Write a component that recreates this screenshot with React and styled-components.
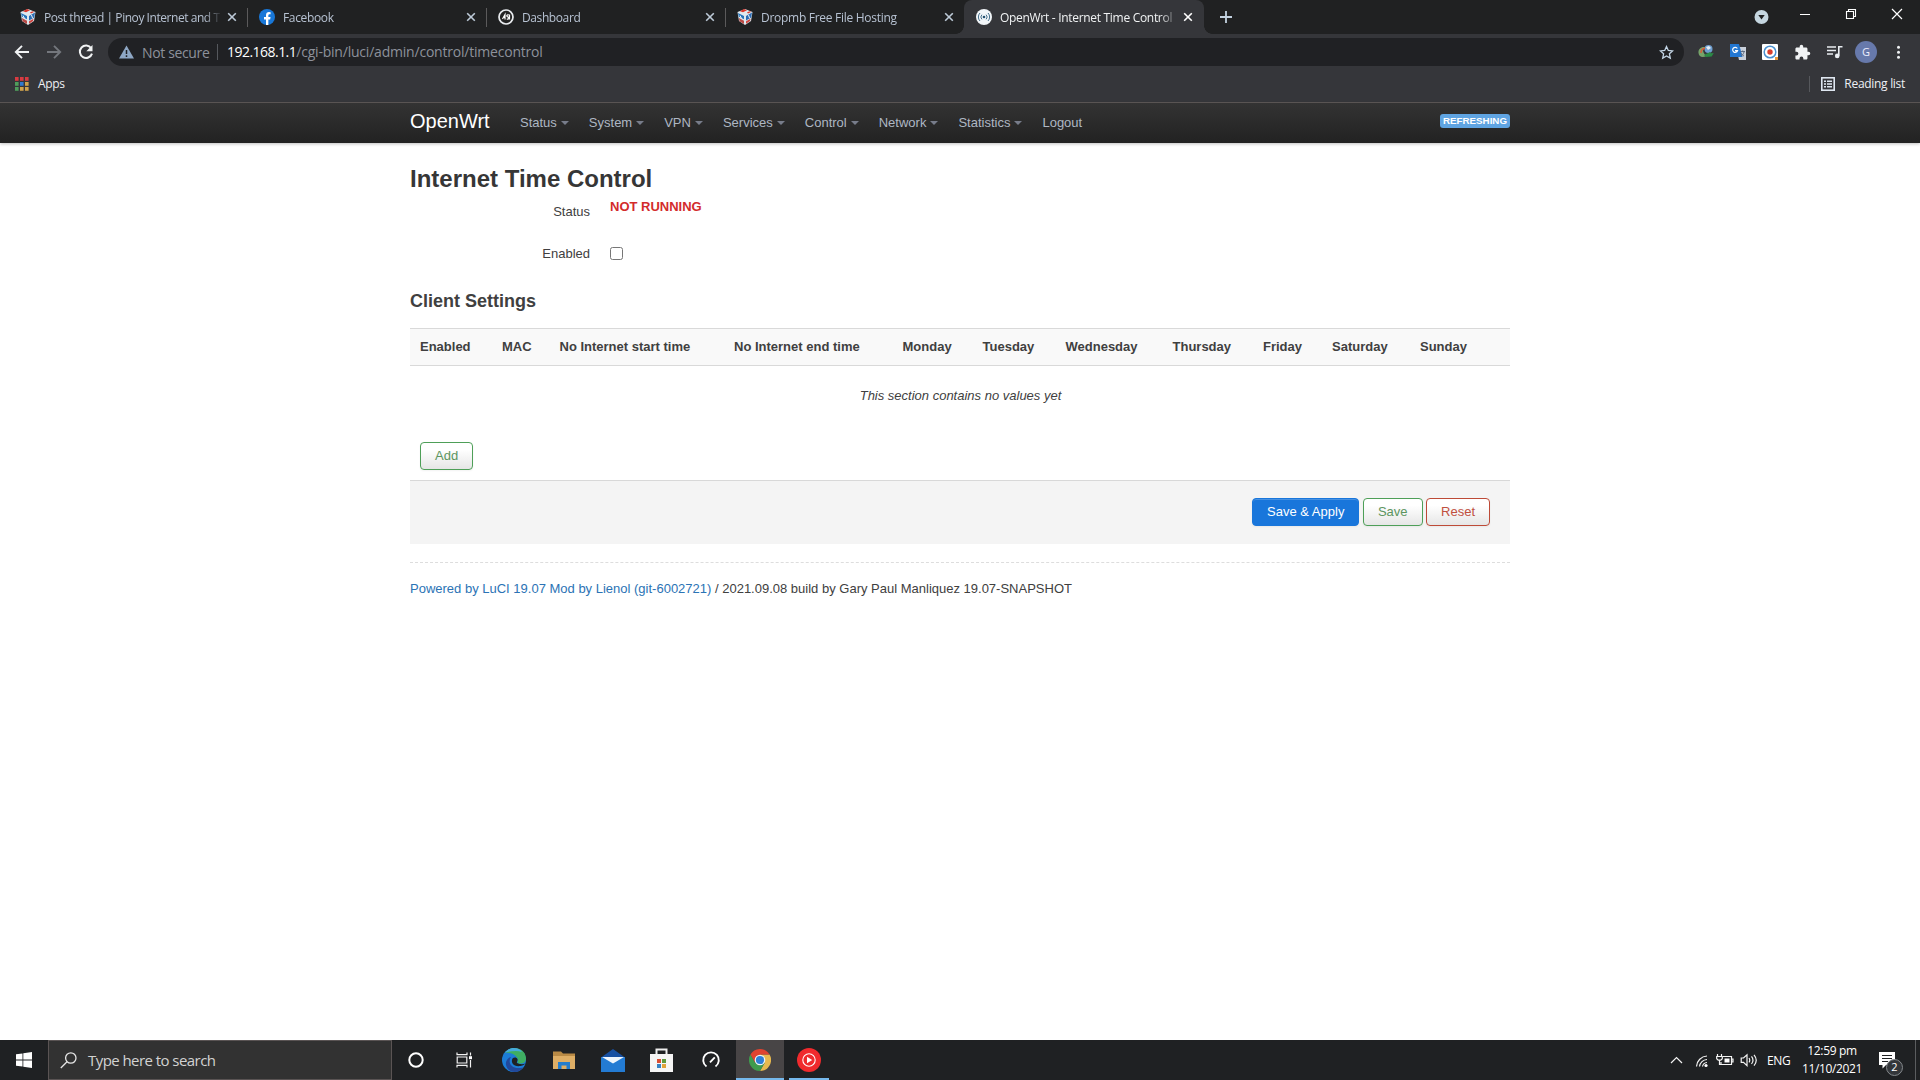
import styled, { createGlobalStyle, css } from "styled-components";

const ui = '"Open Sans", "Noto Sans", sans-serif';
const arial = '"Liberation Sans", Arial, sans-serif';

const GlobalStyle = createGlobalStyle`
    * { box-sizing: border-box; }
    body {
        margin: 0;
        background: #fff;
        overflow: hidden;
    }
    svg { display: block; flex: none; }
`;

const Screen = styled.div`
    width: 1920px;
    height: 1080px;
    display: flex;
    flex-direction: column;
`;

/* ---------- browser ---------- */

const Chrome = styled.header`
    font-family: ${ui};
    background: #35363a;
    height: 103px;
    flex: none;
    border-bottom: 1px solid #5d5857;
`;

const TabStrip = styled.div`
    height: 34px;
    background: #202122;
    display: flex;
    padding-left: 8px;
`;

const Tab = styled.div`
    position: relative;
    width: 239px;
    height: 34px;
    padding: 0 8px 0 12px;
    display: flex;
    align-items: center;
    font-size: 12px;
    color: #b7c2d2;
    ${props => props.$active && css`
        width: 240px;
        background: #35363a;
        color: #f1f3f4;
        border-radius: 8px 8px 0 0;
        &::before, &::after {
            content: "";
            position: absolute;
            bottom: 0;
            width: 8px;
            height: 8px;
        }
        &::before {
            left: -8px;
            background: radial-gradient(circle at 0 0, transparent 7.5px, #35363a 8px);
        }
        &::after {
            right: -8px;
            background: radial-gradient(circle at 100% 0, transparent 7.5px, #35363a 8px);
        }
    `}
    ${props => props.$divided && css`
        &::before {
            content: "";
            position: absolute;
            left: 0;
            top: 8px;
            width: 1px;
            height: 19px;
            background: #5b5a5b;
        }
    `}
`;

const TabTitle = styled.span`
    width: 176px;
    margin: 0 7px 0 8px;
    line-height: 17px;
    white-space: nowrap;
    letter-spacing: ${props => props.$track}px;
    mask-image: linear-gradient(90deg, #000 160px, transparent 178px);
`;

const NewTab = styled.div`
    width: 44px;
    display: flex;
    align-items: center;
    justify-content: center;
`;

const WindowControls = styled.div`
    margin-left: auto;
    padding: 8px 17px 0 0;
    display: flex;
    align-items: flex-start;
    gap: 34px;
`;

const ChromeMenu = styled.div`
    margin-right: -4px;
`;

const Toolbar = styled.div`
    height: 36px;
    display: flex;
    align-items: center;
    padding: 0 6px 0 14px;
`;

const NavButtons = styled.div`
    width: 94px;
    display: flex;
    gap: 16px;
    align-items: center;
`;

const AddressBar = styled.div`
    width: 1576px;
    height: 28px;
    border-radius: 14px;
    background: #202124;
    display: flex;
    align-items: center;
    padding: 0 10px;
    font-size: 14px;
    color: #8d919b;
`;

const Security = styled.div`
    width: 100px;
    height: 16px;
    padding-left: 1px;
    margin-right: 9px;
    display: flex;
    gap: 8px;
    align-items: center;
    border-right: 1px solid #55585d;
    letter-spacing: -0.36px;
    white-space: nowrap;
`;

const Url = styled.span`
    flex: 1;
    letter-spacing: -0.21px;
    line-height: 20px;
    b {
        font-weight: 400;
        color: #fff;
        letter-spacing: -0.53px;
    }
`;

const Extensions = styled.div`
    flex: 1;
    display: grid;
    grid-template-columns: repeat(7, 32px);
    place-items: center;
    padding-left: 6px;
`;

const Avatar = styled.div`
    width: 22px;
    height: 22px;
    border-radius: 50%;
    background: #6779ab;
    color: #eef;
    font-size: 11px;
    line-height: 22px;
    text-align: center;
`;

const Bookmarks = styled.div`
    height: 28px;
    display: flex;
    align-items: center;
    justify-content: space-between;
    padding: 0 15px 0 15px;
    font-size: 12px;
    line-height: 16px;
    color: #eef0f4;
`;

const Bookmark = styled.div`
    display: flex;
    align-items: center;
    gap: 9px;
    letter-spacing: -0.3px;
    span { margin-top: -1px; }
`;

const ReadingList = styled(Bookmark)`
    height: 16px;
    border-left: 1px solid #56585c;
    padding-left: 11px;
`;

/* ---------- router page ---------- */

const Page = styled.div`
    flex: 1;
    background: #fff;
    font-family: ${arial};
    font-size: 13px;
    line-height: 18px;
    color: #404040;
`;

const TopBar = styled.nav`
    height: 40px;
    background: linear-gradient(#333, #222);
    box-shadow: 0 1px 3px rgba(0, 0, 0, 0.25);
`;

const Container = styled.div`
    width: 1100px;
    margin: 0 auto;
`;

const NavRow = styled(Container)`
    height: 38px;
    display: flex;
    align-items: center;
`;

const Brand = styled.span`
    color: #fff;
    font-size: 20px;
    width: 110px;
    line-height: 20px;
    padding-bottom: 3px;
`;

const NavItem = styled.a`
    display: flex;
    align-items: center;
    color: #aeb7c3;
    margin-right: 20px;
    padding-top: 1px;
    ${props => props.$menu && css`
        &::after {
            content: "";
            border: 4px solid transparent;
            border-top-color: #777c8a;
            border-bottom: 0;
            margin: 1px 0 0 4px;
        }
    `}
`;

const Indicator = styled.span`
    margin: 0 0 3px auto;
    padding: 0 3px;
    height: 14px;
    border-radius: 3px;
    background: #5fa4e2;
    color: #fff;
    font-size: 9.75px;
    font-weight: 700;
    line-height: 13px;
`;

const Title = styled.h2`
    margin: 0;
    padding-top: 18px;
    font-size: 24px;
    line-height: 36px;
    color: #363636;
`;

const Field = styled.div`
    display: flex;
    height: ${props => props.$height}px;
`;

const Label = styled.label`
    width: 180px;
    margin-right: 20px;
    padding-top: 6px;
    text-align: right;
`;

const StatusText = styled.b`
    color: #d32b2b;
    padding-top: 1px;
`;

const Checkbox = styled.input`
    width: 13px;
    height: 13px;
    margin: 8px 0 0;
`;

const SectionTitle = styled.h3`
    margin: 0;
    font-size: 18px;
    line-height: 36px;
    color: #404040;
`;

const HeadRow = styled.div`
    margin-top: 9px;
    height: 38px;
    display: grid;
    grid-template-columns: 82px 57.5px 174.5px 168.5px 80px 83px 107px 90.5px 69px 88px 1fr;
    align-items: center;
    background: #f9f9f9;
    border-top: 1px solid #d9d9d9;
    border-bottom: 1px solid #d9d9d9;
    font-weight: 700;
    span { padding-left: 10px; white-space: nowrap; }
`;

const EmptyRow = styled.div`
    height: 76px;
    padding: 21px 0 0 1px;
    text-align: center;
    font-style: italic;
`;

const tones = {
    save: { color: '#5c9560', border: '#4e9f58' },
    reset: { color: '#c0503f', border: '#bd4a37' },
};

const Button = styled.button`
    height: 28px;
    padding: 0 14px 1px;
    border-radius: 4px;
    font: 13px/18px ${arial};
    color: ${props => tones[props.$tone].color};
    border: 1px solid ${props => tones[props.$tone].border};
    background: linear-gradient(#fff, #fff 25%, #e6e6e6);
    box-shadow: inset 0 1px 0 rgba(255, 255, 255, .2), 0 1px 2px rgba(0, 0, 0, .05);
`;

const PrimaryButton = styled(Button)`
    color: #fff;
    border-color: #1976db;
    background: #1976db;
`;

const AddRow = styled.div`
    height: 38px;
    padding-left: 10px;
`;

const Actions = styled.div`
    height: 64px;
    padding: 17px 20px 0 0;
    display: flex;
    justify-content: flex-end;
    gap: 3.5px;
    background: #f4f4f4;
    border-top: 1px solid #d8d8d8;
`;

const Footer = styled.footer`
    margin-top: 18px;
    padding-top: 17px;
    border-top: 1px dashed #ddd;
    a { color: #2b73b5; }
`;

/* ---------- taskbar ---------- */

const Taskbar = styled.footer`
    height: 40px;
    flex: none;
    background: #1f2123;
    display: flex;
    font-family: ${ui};
    color: #fff;
`;

const Cell = styled.div`
    width: ${props => props.$w}px;
    height: 40px;
    display: flex;
    align-items: center;
    justify-content: center;
    ${props => props.$running && css`
        padding-top: 2px;
        border-bottom: 2px solid #76b9ed;
    `}
    ${props => props.$active && css`
        background: #484546;
    `}
`;

const BackgroundCell = styled(Cell)`
    margin-left: 5px;
`;

const SearchBox = styled.div`
    width: 344px;
    border: 1px solid #5a5454;
    background: #323232;
    display: flex;
    align-items: center;
    gap: 11px;
    padding-left: 11px;
    font-size: 15px;
    color: #d2d2d2;
    letter-spacing: -0.56px;
`;

const Tray = styled.div`
    margin-left: auto;
    display: flex;
    align-items: center;
`;

const Lang = styled.span`
    width: 24px;
    margin-left: 8px;
    font-size: 12px;
    letter-spacing: -0.4px;
`;

const Clock = styled.div`
    width: 76px;
    margin-left: 3px;
    text-align: center;
    font-size: 12px;
    line-height: 18px;
    letter-spacing: -0.35px;
`;

const Notice = styled.div`
    position: relative;
    width: 24px;
    height: 40px;
    margin: 0 12px 0 9px;
    padding-top: 12px;
`;

const NoticeCount = styled.span`
    position: absolute;
    left: 7px;
    top: 19px;
    width: 17px;
    height: 17px;
    border-radius: 50%;
    border: 1px solid #85898c;
    background: #33363a;
    font-size: 11px;
    line-height: 14px;
    text-align: center;
`;

const ShowDesktop = styled.div`
    width: 5px;
    height: 40px;
    border-left: 1px solid #5b5d5f;
`;

/* ---------- icons ---------- */

const CubeIcon = () => (
    <svg width="16" height="18" viewBox="0 0 16 18">
        <path d="M.5 4 8 1l7.500 3-1.500 9-6 4-6-4z" fill="#dfe8ee" />
        <path d="M3 3.300 7 1l3 1.200L6 4.300zM10 4.200l3-1 1 .8-3 1.500z" fill="#d9352b" />
        <path d="M1 5l6 3v3.200L1.800 8.500z" fill="#2472ba" />
        <path d="M9 8l6-3.500-.8 5L9 12.500z" fill="#2b6cb4" />
        <path d="M2 10l5 2.800V16l-4.500-2.800z" fill="#b94a45" />
        <path d="M9 13.200l4.500-2.500-.4 2.300L9 15.800z" fill="#cf4640" />
        <path d="M3 7.500l1.500 3M11.500 7l1 3" stroke="#eef5fa" strokeWidth="1" fill="none" />
    </svg>
);

const FacebookIcon = () => (
    <svg width="16" height="16" viewBox="0 0 16 16">
        <circle cx="8" cy="8" r="8" fill="#1877d8" />
        <path d="M7 16v-5.600H5V8h2V6.300C7 4.200 8.200 3.100 10 3.100l1.600.15v2h-1c-1 0-1.250.6-1.250 1.250V8h2.200l-.4 2.400H9.350V16z" fill="#fff" />
    </svg>
);

const DashIcon = () => (
    <svg width="16" height="16" viewBox="0 0 16 16">
        <circle cx="8" cy="8" r="7" fill="#222" stroke="#e9ecef" strokeWidth="1.700" />
        <path d="M4.500 10 7 5.500v5M6 8.500h1.500M10.800 6c-2-.8-2.800 1.200-1 1.900s1 2.600-1 2M11.500 5.500v5" stroke="#fff" strokeWidth="1.200" fill="none" />
    </svg>
);

const WrtIcon = () => (
    <svg width="16" height="16" viewBox="0 0 16 16">
        <circle cx="8" cy="8" r="8" fill="#f2f6f9" />
        <circle cx="8" cy="8" r="1.300" fill="#24506f" />
        <path d="M5.900 5.700a3.300 3.300 0 0 0 0 4.600M10.100 5.700a3.300 3.300 0 0 1 0 4.600M4 4a5.700 5.700 0 0 0 0 8M12 4a5.700 5.700 0 0 1 0 8" stroke="#456f8c" strokeWidth="1" fill="none" />
    </svg>
);

const CloseIcon = ({ color = '#bdcad8' }) => (
    <svg width="10" height="10" viewBox="0 0 10 10" stroke={color} strokeWidth="1.600">
        <path d="M1.200 1.200l7.600 7.600M8.800 1.200 1.200 8.800" />
    </svg>
);

const Arrow = ({ color, back }) => (
    <svg width="16" height="16" viewBox="0 0 16 16" fill="none" stroke={color} strokeWidth="1.900">
        <path d={back ? 'M15 8H2.500M8 1.800 1.800 8 8 14.200' : 'M1 8h12.500M8 1.800 14.200 8 8 14.200'} />
    </svg>
);

const ReloadIcon = () => (
    <svg width="16" height="16" viewBox="0 0 16 16">
        <path d="M13.200 4.200A6.200 6.200 0 1 0 14 9.600" fill="none" stroke="#f1f3f4" strokeWidth="2" />
        <path d="M14.500 1v6.200H8.300z" fill="#f1f3f4" />
    </svg>
);

const WarnIcon = () => (
    <svg width="15" height="14" viewBox="0 0 15 14">
        <path d="M7.500.5 15 13.500H0z" fill="#8ea7c4" />
        <path d="M7.500 5v4M7.500 10.300v1.600" stroke="#202124" strokeWidth="1.500" />
    </svg>
);

const StarIcon = () => (
    <svg width="15" height="15" viewBox="0 0 15 15">
        <path d="M7.500 1.500l1.800 4 4.300.4-3.200 2.900.9 4.300-3.800-2.200-3.800 2.200.9-4.300L1.400 5.900l4.300-.4z" fill="none" stroke="#c3d5e5" strokeWidth="1.300" />
    </svg>
);

const GlobeArrowIcon = () => (
    <svg width="16" height="16" viewBox="0 0 16 16">
        <circle cx="10.500" cy="5" r="4" fill="#6f9fd0" />
        <path d="M8 3l3-1 2 2-3 2z" fill="#e7eef5" />
        <path d="M.5 9C0 5 4 2 7.500 3.500c-3.500 1.500-3 5 1 8.500-4 2-7.500 1-8-3z" fill="#77a36a" />
        <path d="M3 9c0-3 1.500-4.500 4-4.800" stroke="#d95a3b" strokeWidth="1.500" fill="none" />
        <path d="M6 11l6-3 1 1.200 2.700-.2-2 3.500L8 13z" fill="#2b8a45" />
    </svg>
);

const TranslateIcon = () => (
    <svg width="16" height="16" viewBox="0 0 16 16">
        <path d="M6 3h10v13H9z" fill="#c9d0da" />
        <path d="M0 0h9l3.500 13H0z" fill="#2277d2" />
        <path d="M7.300 4.500A2.500 2.500 0 1 0 7.500 6.700H5" stroke="#fff" strokeWidth="1.200" fill="none" />
        <path d="M10.500 7.500h4.500M12.700 6.500v1M14 8c-.5 2-1.500 3-3 4M11 9c.5 1.500 2 2.500 3 3" stroke="#56657d" strokeWidth=".9" fill="none" />
    </svg>
);

const TargetIcon = () => (
    <svg width="16" height="16" viewBox="0 0 16 16">
        <rect width="16" height="16" rx="1" fill="#fff" />
        <circle cx="8" cy="8" r="5.800" fill="none" stroke="#4a90cf" strokeWidth="1.500" />
        <circle cx="8" cy="8" r="2.700" fill="#d93d2d" />
        <path d="M13 13h3v3h-3z" fill="#e89a3c" />
    </svg>
);

const PuzzleIcon = () => (
    <svg width="17" height="17" viewBox="0 0 24 24" fill="#f1f3f4">
        <path d="M20.500 11H19V7c0-1.100-.9-2-2-2h-4V3.500a2.500 2.500 0 0 0-5 0V5H4c-1.100 0-2 .9-2 2v3.800h1.500a2.700 2.700 0 0 1 0 5.400H2V20c0 1.100.9 2 2 2h3.800v-1.500a2.700 2.700 0 0 1 5.400 0V22H17c1.100 0 2-.9 2-2v-4h1.500a2.500 2.500 0 0 0 0-5z" />
    </svg>
);

const QueueIcon = () => (
    <svg width="17" height="14" viewBox="0 0 17 14">
        <path d="M1 2h9M1 5.500h9M1 9h6" stroke="#e9edf1" strokeWidth="1.500" />
        <path d="M16.500 1.700h-3.700v9" stroke="#e9edf1" strokeWidth="1.600" fill="none" />
        <circle cx="11.200" cy="10.900" r="2.300" fill="#e9edf1" />
    </svg>
);

const DotsIcon = () => (
    <svg width="14" height="16" viewBox="0 0 14 16" fill="#eef1f3">
        <circle cx="7.500" cy="3.200" r="1.500" /><circle cx="7.500" cy="8.200" r="1.500" /><circle cx="7.500" cy="13.200" r="1.500" />
    </svg>
);

const appColors = ['#d93b41', '#d93b41', '#d93b41', '#4f9d5b', '#3079cf', '#cfa24c', '#4f9d5b', '#cfa24c', '#cfa24c'];

const AppsIcon = () => (
    <svg width="14" height="14" viewBox="0 0 14 14">
        {appColors.map((c, i) => (
            <rect key={i} x={(i % 3) * 5} y={Math.floor(i / 3) * 5} width="3.600" height="3.800" fill={c} />
        ))}
    </svg>
);

const ListIcon = () => (
    <svg width="14" height="14" viewBox="0 0 14 14">
        <rect x=".8" y=".8" width="12.400" height="12.400" fill="none" stroke="#dfe7f1" strokeWidth="1.600" />
        <path d="M3 4.200h2M6 4.200h5M3 7h2M6 7h5M3 9.800h2M6 9.800h5" stroke="#dfe7f1" strokeWidth="1.500" />
    </svg>
);

const StartIcon = () => (
    <svg width="16" height="16" viewBox="0 0 16 16" fill="#fff">
        <path d="M0 2.300 6.500 1.400v6.200H0zM7.300 1.300 16 0v7.600H7.300zM0 8.400h6.500v6.200L0 13.700zM7.300 8.400H16V16l-8.700-1.300z" />
    </svg>
);

const SearchIcon = () => (
    <svg width="17" height="17" viewBox="0 0 17 17" fill="none" stroke="#e6e6e6" strokeWidth="1.300">
        <circle cx="10.800" cy="6" r="5.200" /><path d="M7 9.800.8 16" />
    </svg>
);

const CortanaIcon = () => (
    <svg width="16" height="16" viewBox="0 0 16 16"><circle cx="8" cy="8" r="6.700" fill="none" stroke="#fff" strokeWidth="2" /></svg>
);

const TaskViewIcon = () => (
    <svg width="17" height="16" viewBox="0 0 17 16" fill="none" stroke="#f1f1f1" strokeWidth="1.200">
        <path d="M1 .5v2.200h10V.5M1 15.500v-2.200h10v2.200M1.200 5h9.600v6H1.200zM14.500.5v3M14.500 8v7.500" />
        <path d="M13 4.200h3v3h-3z" fill="#fff" stroke="none" />
    </svg>
);

const EdgeIcon = () => (
    <svg width="24" height="24" viewBox="0 0 24 24">
        <circle cx="12" cy="12" r="12" fill="#1c7cd6" />
        <path d="M3 4.500C9-3 23-1 24 10c.3 4-3 6-7 5.500-2-.3-1.500-1.500-1-3C16 8 9 4 3 4.500z" fill="#3fae62" />
        <path d="M3 4.500C8-2 17-.5 20 4c-5-2-11-1-17 .5z" fill="#46aadb" />
        <path d="M9 9c-4 6 1 13 12 10.500C17 26 6 25.500 4 17c-.8-4 2-7.500 5-8z" fill="#22489a" />
        <path d="M10.500 10.500c-2 4 1 8.500 8 7.500 3-.4 4.500-2 5-2.500-2 1-6 .8-8-.2-1.600-1 .5-2 0-4-.6-2.200-3.600-2.500-5-.8z" fill="#1f2123" />
    </svg>
);

const FolderIcon = () => (
    <svg width="22" height="19" viewBox="0 0 22 19">
        <path d="M0 .5h8l2 2h12V18H0z" fill="#b98a45" />
        <path d="M0 5h22v13H0z" fill="#deae65" />
        <path d="M5 18v-7h12v7h-3.500v-3.500h-5V18z" fill="#257dcc" />
    </svg>
);

const MailIcon = () => (
    <svg width="24" height="23" viewBox="0 0 24 23">
        <path d="M0 8.500 12 0l12 8.500z" fill="#1750a2" />
        <path d="M0 8h24v15H0z" fill="#237bd3" />
        <path d="M1 8h22l-11 6.500z" fill="#eef5fc" />
    </svg>
);

const StoreIcon = () => (
    <svg width="23" height="24" viewBox="0 0 23 24">
        <path d="M6.500 7V1.500h10V7" fill="none" stroke="#eee" strokeWidth="2" />
        <path d="M0 6h23v18H0z" fill="#f5f5f5" />
        <path d="M7 11h4v4H7z" fill="#d94d32" /><path d="M12 11h4v4h-4z" fill="#5e9a3e" />
        <path d="M7 16h4v4H7z" fill="#3582c4" /><path d="M12 16h4v4h-4z" fill="#e0a23a" />
    </svg>
);

const GaugeIcon = () => (
    <svg width="20" height="20" viewBox="0 0 20 20" fill="none" stroke="#fff" strokeWidth="1.900">
        <path d="M5.500 16.500a7.800 7.800 0 1 1 9 0M9 12.300l4.800-5" />
    </svg>
);

const ChromeIcon = () => (
    <svg width="22" height="22" viewBox="0 0 22 22">
        <path d="M11 11V5.500h9.530A11 11 0 0 1 11 22l4.500-8z" fill="#e8b94e" />
        <path d="M11 11l4.760 2.750L11 22A11 11 0 0 1 1.470 5.500l4.770 8.250z" fill="#3f9a4e" />
        <path d="M11 5.500h9.530a11 11 0 0 0-19.060 0l4.770 8.250z" fill="#df4330" />
        <circle cx="11" cy="11" r="5.300" fill="#eef3f8" />
        <circle cx="11" cy="11" r="4.100" fill="#2f7fd6" />
    </svg>
);

const MusicIcon = () => (
    <svg width="24" height="24" viewBox="0 0 24 24">
        <circle cx="12" cy="12" r="12" fill="#f02a2d" />
        <circle cx="12" cy="12" r="6.200" fill="none" stroke="#fff" strokeWidth="1.100" />
        <path d="M10 8.800l5.200 3.200-5.200 3.200z" fill="#fff" />
    </svg>
);

const TrayIcons = () => (
    <svg width="90" height="18" viewBox="0 0 90 18" fill="none" stroke="#f4f4f4" strokeWidth="1.200">
        <path d="M2 12l5.500-5.500L13 12" />
        <path d="M27.500 15.500A11 11 0 0 1 38 5M30.500 15.500A8 8 0 0 1 38 8.500M33.500 15.500A5 5 0 0 1 38 11.500" />
        <circle cx="37" cy="14.500" r="1.600" fill="#fff" stroke="none" />
        <g transform="translate(1 0)">
            <path d="M53 5.500h8.500v8H51V11M61.500 8h1.500v3h-1.500M47.500 3v2.500M51.500 3v2.500M46.700 5.500h5.600v2.200l-1.500 1.500h-2.600l-1.500-1.500zM49.500 9v4.500H51" />
            <path d="M54.500 7.500h5v4h-5z" fill="#fff" stroke="none" />
            <path d="M71.200 7h2.300l3.500-3.200v10.800l-3.500-3.200h-2.300zM79 7q1.500 2.200 0 4.400M81.500 5.400q3 3.800 0 7.600M84 3.800q4.500 5.400 0 10.800" />
        </g>
    </svg>
);

const NoticeIcon = () => (
    <svg width="16" height="17" viewBox="0 0 16 17">
        <path d="M0 0h16v13H7l-3.500 3.500V13H0z" fill="#fff" />
        <path d="M3 3.500h10M3 6.500h10M3 9.500h6" stroke="#1f2123" strokeWidth="1.200" />
    </svg>
);

const tabs = [
    { title: 'Post thread | Pinoy Internet and T', icon: <CubeIcon />, track: -0.45 },
    { title: 'Facebook', icon: <FacebookIcon />, track: -0.35 },
    { title: 'Dashboard', icon: <DashIcon />, track: -0.4 },
    { title: 'Dropmb Free File Hosting', icon: <CubeIcon />, track: -0.28 },
    { title: 'OpenWrt - Internet Time Control', icon: <WrtIcon />, track: -0.3 },
];

const menus = ['Status', 'System', 'VPN', 'Services', 'Control', 'Network', 'Statistics'];

const columns = [
    'Enabled', 'MAC', 'No Internet start time', 'No Internet end time',
    'Monday', 'Tuesday', 'Wednesday', 'Thursday', 'Friday', 'Saturday', 'Sunday',
];

const Browser = () => (
    <Chrome>
        <TabStrip>
            {tabs.map((tab, i) => (
                <Tab key={i} $active={i === 4} $divided={i > 0 && i < 4}>
                    {tab.icon}
                    <TabTitle $track={tab.track}>{tab.title}</TabTitle>
                    <CloseIcon color={i === 4 ? '#fff' : undefined} />
                </Tab>
            ))}
            <NewTab>
                <svg width="12" height="12" viewBox="0 0 12 12"><path d="M6 0v12M0 6h12" stroke="#c3d2e0" strokeWidth="1.800" /></svg>
            </NewTab>
            <WindowControls>
                <ChromeMenu>
                    <svg width="16" height="18" viewBox="0 0 16 18">
                        <circle cx="8.500" cy="9" r="7" fill="#c5d6e0" />
                        <path d="M5.300 7h6.400L8.500 11.500z" fill="#202122" />
                    </svg>
                </ChromeMenu>
                <svg width="12" height="12" viewBox="0 0 12 12"><path d="M1 6.500h10" stroke="#fff" /></svg>
                <svg width="12" height="12" viewBox="0 0 12 12" fill="none" stroke="#fff" strokeWidth="1.100">
                    <path d="M1.500 3.500h7v7h-7zM3.500 3.500v-2h7v7h-2" />
                </svg>
                <svg width="12" height="12" viewBox="0 0 12 12" stroke="#fff" strokeWidth="1.200"><path d="M1 1l10 10M11 1 1 11" /></svg>
            </WindowControls>
        </TabStrip>
        <Toolbar>
            <NavButtons>
                <Arrow back color="#f1f3f4" />
                <Arrow color="#74777d" />
                <ReloadIcon />
            </NavButtons>
            <AddressBar>
                <Security>
                    <WarnIcon />
                    Not secure
                </Security>
                <Url><b>192.168.1.1</b>/cgi-bin/luci/admin/control/timecontrol</Url>
                <StarIcon />
            </AddressBar>
            <Extensions>
                <GlobeArrowIcon />
                <TranslateIcon />
                <TargetIcon />
                <PuzzleIcon />
                <QueueIcon />
                <Avatar>G</Avatar>
                <DotsIcon />
            </Extensions>
        </Toolbar>
        <Bookmarks>
            <Bookmark><AppsIcon /><span>Apps</span></Bookmark>
            <ReadingList><ListIcon /><span>Reading list</span></ReadingList>
        </Bookmarks>
    </Chrome>
);

const Router = () => (
    <Page>
        <TopBar>
            <NavRow>
                <Brand>OpenWrt</Brand>
                {menus.map(name => <NavItem key={name} $menu>{name}</NavItem>)}
                <NavItem>Logout</NavItem>
                <Indicator>REFRESHING</Indicator>
            </NavRow>
        </TopBar>
        <Container>
            <Title>Internet Time Control</Title>
            <Field $height={42}>
                <Label>Status</Label>
                <StatusText>NOT RUNNING</StatusText>
            </Field>
            <Field $height={44}>
                <Label>Enabled</Label>
                <Checkbox type="checkbox" />
            </Field>
            <SectionTitle>Client Settings</SectionTitle>
            <HeadRow>
                {columns.map(name => <span key={name}>{name}</span>)}
            </HeadRow>
            <EmptyRow>This section contains no values yet</EmptyRow>
            <AddRow><Button $tone="save">Add</Button></AddRow>
            <Actions>
                <PrimaryButton $tone="save">Save &amp; Apply</PrimaryButton>
                <Button $tone="save">Save</Button>
                <Button $tone="reset">Reset</Button>
            </Actions>
            <Footer>
                <a>Powered by LuCI 19.07 Mod by Lienol (git-6002721)</a> / 2021.09.08 build by Gary Paul Manliquez 19.07-SNAPSHOT
            </Footer>
        </Container>
    </Page>
);

const WindowsBar = () => (
    <Taskbar>
        <Cell $w={48}><StartIcon /></Cell>
        <SearchBox><SearchIcon />Type here to search</SearchBox>
        <Cell $w={48}><CortanaIcon /></Cell>
        <Cell $w={49}><TaskViewIcon /></Cell>
        <Cell $w={50}><EdgeIcon /></Cell>
        <Cell $w={49}><FolderIcon /></Cell>
        <Cell $w={49}><MailIcon /></Cell>
        <Cell $w={49}><StoreIcon /></Cell>
        <Cell $w={50}><GaugeIcon /></Cell>
        <Cell $w={48} $running $active><ChromeIcon /></Cell>
        <BackgroundCell $w={40} $running><MusicIcon /></BackgroundCell>
        <Tray>
            <TrayIcons />
            <Lang>ENG</Lang>
            <Clock>12:59 pm<br />11/10/2021</Clock>
            <Notice>
                <NoticeIcon />
                <NoticeCount>2</NoticeCount>
            </Notice>
            <ShowDesktop />
        </Tray>
    </Taskbar>
);

const App = () => {
    return (
        <Screen>
            <GlobalStyle />
            <Browser />
            <Router />
            <WindowsBar />
        </Screen>
    );
}

export default App;
